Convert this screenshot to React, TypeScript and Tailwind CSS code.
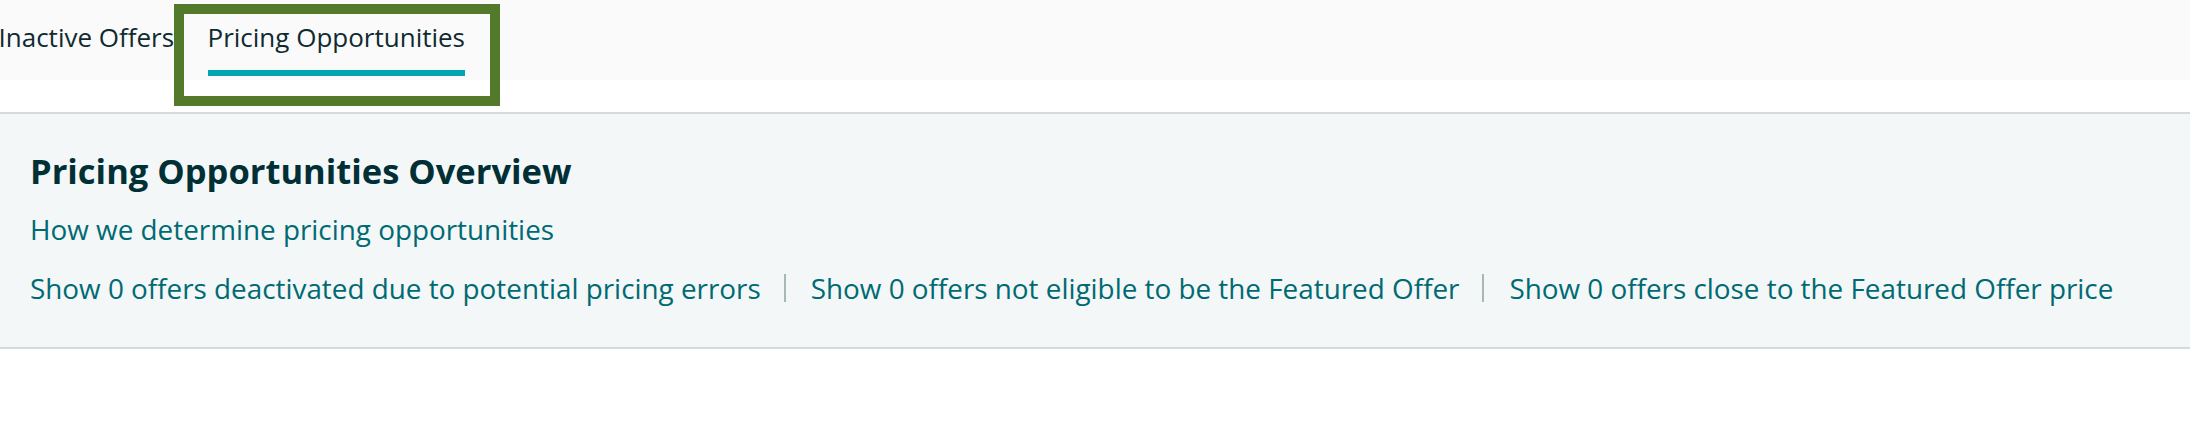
import React from "react";

const links = [
  "Show 0 offers deactivated due to potential pricing errors",
  "Show 0 offers not eligible to be the Featured Offer",
  "Show 0 offers close to the Featured Offer price",
];

export default function App() {
  return (
    <div className="w-[2190px] h-[436px] bg-white font-['Open_Sans',sans-serif] overflow-hidden">
      {/* Tab bar */}
      <div className="relative h-[80px] bg-[#fafafa] flex items-start">
        <span className="ml-[-1.5px] pt-[19px] text-[26px] leading-[36px] text-[#0f2a30] whitespace-nowrap w-[176px] overflow-hidden">
          Inactive Offers
        </span>
        <div className="ml-[33px] pt-[19px] flex flex-col">
          <span className="text-[26px] leading-[36px] text-[#0f2a30] whitespace-nowrap">
            Pricing Opportunities
          </span>
          <div className="mt-[15px] h-[6px] bg-[#00a4b4]" />
        </div>
        <div className="absolute left-[174px] top-[4px] w-[326px] h-[102px] border-[10px] border-[#527a2a] pointer-events-none" />
      </div>

      {/* spacer */}
      <div className="h-[32px]" />

      {/* Overview panel */}
      <div className="border-y-2 border-[#d5dbdb] bg-[#f3f7f8] px-[30px] pt-[37px] pb-[41px]">
        <h1 className="text-[34.5px] leading-[40px] font-bold text-[#002f36] whitespace-nowrap">
          Pricing Opportunities Overview
        </h1>
        <div className="mt-[20px] text-[27.85px] leading-[36px] text-[#006a73] whitespace-nowrap">
          How we determine pricing opportunities
        </div>
        <div className="mt-[23px] flex items-center text-[27.85px] leading-[36px] text-[#006a73] whitespace-nowrap">
          {links.map((l, i) => (
            <React.Fragment key={l}>
              {i > 0 && <span className="ml-[23px] mr-[25px] w-[2px] h-[28px] bg-[#aab7b8]" />}
              <span>{l}</span>
            </React.Fragment>
          ))}
        </div>
      </div>
    </div>
  );
}
